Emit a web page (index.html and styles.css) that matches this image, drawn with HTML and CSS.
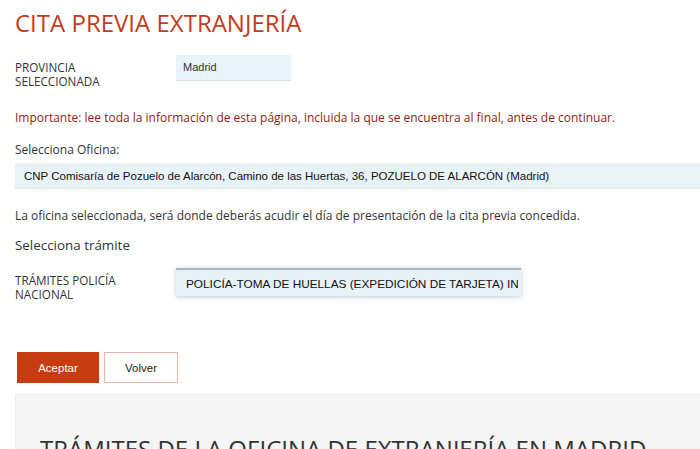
FILE: index.html
```html
<!DOCTYPE html>
<html lang="es">
<head>
<meta charset="utf-8">
<title>Cita previa extranjería</title>
<link rel="stylesheet" href="styles.css">
</head>
<body>
<div class="page">
  <h1 class="title">CITA PREVIA EXTRANJERÍA</h1>

  <div class="field-row first-row">
    <div class="field-label">PROVINCIA<br>SELECCIONADA</div>
    <div class="value-box">Madrid</div>
  </div>

  <p class="important">Importante: lee toda la información de esta página, incluida la que se encuentra al final, antes de continuar.</p>

  <p class="label-above">Selecciona Oficina:</p>
  <div class="office-box">CNP Comisaría de Pozuelo de Alarcón, Camino de las Huertas, 36, POZUELO DE ALARCÓN (Madrid)</div>

  <p class="info">La oficina seleccionada, será donde deberás acudir el día de presentación de la cita previa concedida.</p>

  <h2 class="subhead">Selecciona trámite</h2>

  <div class="field-row second-row">
    <div class="field-label">TRÁMITES POLICÍA<br>NACIONAL</div>
    <div class="select-box"><span class="select-text">POLICÍA-TOMA DE HUELLAS (EXPEDICIÓN DE TARJETA) INICIAL, RENOVACIÓN, DUPLICADO Y LEY 14/2013</span></div>
  </div>

  <div class="actions">
    <button class="btn btn-primary" type="button">Aceptar</button>
    <button class="btn btn-secondary" type="button">Volver</button>
  </div>
</div>

<section class="panel">
  <h2 class="panel-title">TRÁMITES DE LA OFICINA DE EXTRANJERÍA EN MADRID</h2>
</section>
</body>
</html>
```

FILE: styles.css
```css
html, body {
  margin: 0;
  padding: 0;
  background: #ffffff;
  overflow: hidden;
}

body {
  font-family: "Open Sans", "DejaVu Sans", sans-serif;
  color: #333333;
  width: 700px;
}

.page {
  padding: 0 0 0 15px;
}

.title {
  margin: 0;
  padding-top: 8px;
  font-size: 24px;
  line-height: 30px;
  font-weight: 400;
  color: #c23c1c;
}

.field-row {
  display: grid;
  grid-template-columns: 161px auto;
  align-items: start;
}

.first-row {
  margin-top: 17px;
}

.field-label {
  font-size: 11.7px;
  line-height: 13.5px;
  color: #333333;
  padding-top: 6px;
}

.value-box {
  width: 115px;
  height: 26px;
  box-sizing: border-box;
  padding: 6px 7px;
  background: #e7f3f8;
  border-bottom: 1px solid #d9e4e9;
  font-family: "Liberation Sans", Arial, sans-serif;
  font-size: 11px;
  line-height: 13px;
  color: #333333;
}

.important {
  margin: 22px 0 0;
  font-size: 12px;
  line-height: 16px;
  color: #8e1e12;
}

.label-above {
  margin: 16px 0 0;
  font-size: 12px;
  line-height: 16px;
}

.office-box {
  margin-top: 5px;
  width: 720px;
  height: 26px;
  box-sizing: border-box;
  padding: 6px 9px;
  background: #e8f3f8;
  border-bottom: 1px solid #dae5ea;
  font-family: "Liberation Sans", Arial, sans-serif;
  font-size: 11.5px;
  line-height: 14px;
  color: #111111;
  white-space: nowrap;
}

.info {
  margin: 19px 0 0;
  font-size: 12px;
  line-height: 16px;
}

.subhead {
  margin: 12px 0 0;
  font-size: 13.4px;
  line-height: 18px;
  font-weight: 400;
  color: #333333;
}

.second-row {
  margin-top: 14px;
}

.select-box {
  width: 345px;
  height: 28px;
  box-sizing: border-box;
  padding: 7px 3px 0 10px;
  background: #e6f2f7;
  border-top: 2px solid #a9b9c1;
  box-shadow: 0 1px 5px rgba(70, 110, 130, 0.35);
  font-family: "Liberation Sans", Arial, sans-serif;
  font-size: 11.8px;
  line-height: 14px;
  color: #111111;
  overflow: hidden;
  white-space: nowrap;
}

.select-text {
  display: block;
  overflow: hidden;
}

.actions {
  display: flex;
  gap: 5px;
  margin-top: 51px;
  padding-left: 2px;
}

.btn {
  height: 31px;
  box-sizing: border-box;
  font-family: "Liberation Sans", Arial, sans-serif;
  font-size: 11.5px;
  line-height: 14px;
  padding: 0;
  border-radius: 0;
  cursor: pointer;
}

.btn-primary {
  width: 82px;
  background: #c63c0f;
  border: 1px solid #c63c0f;
  color: #ffffff;
}

.btn-secondary {
  width: 74px;
  background: #ffffff;
  border: 1px solid #e9b7ae;
  color: #222222;
}

.panel {
  margin: 11px 0 0 15px;
  background: #f5f5f5;
  border-top: 1px solid #ececec;
  border-left: 1px solid #f0f0f0;
  padding: 40px 0 40px 24px;
  width: 700px;
}

.panel-title {
  margin: 0;
  font-size: 24px;
  line-height: 28px;
  font-weight: 400;
  color: #333333;
  white-space: nowrap;
}
```
